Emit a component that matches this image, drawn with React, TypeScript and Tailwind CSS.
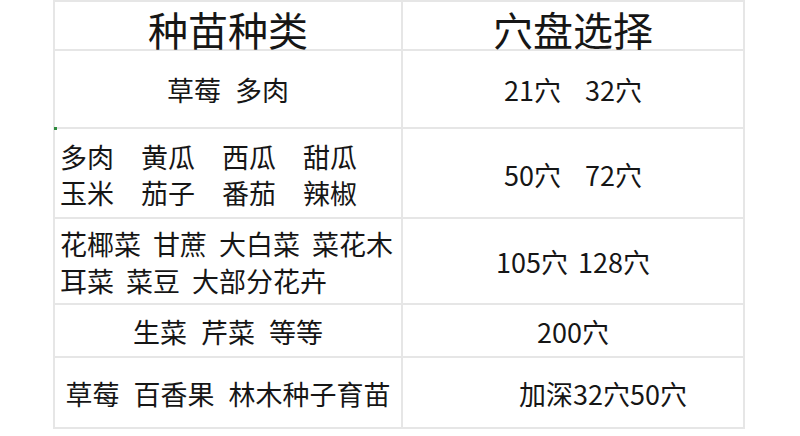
const cjk = { fontFamily: '"Noto Sans CJK SC", "Noto Sans", sans-serif' };

const Words = ({ words, gap }: { words: string[]; gap: string }) => (
  <div className={`flex ${gap}`}>
    {words.map((w, i) => (
      <span key={i} className="whitespace-nowrap">{w}</span>
    ))}
  </div>
);

const App = () => {
  return (
    <div className="h-[436px] w-[800px] bg-white text-[#161616]" style={cjk}>
      <div className="relative ml-[53px] grid w-[692px] grid-cols-[346px_340px] grid-rows-[47px_76px_88px_84px_51px_69px] gap-[2px] bg-[#e6e6e6] p-[2px]">
        {/* header */}
        <div className="flex items-center justify-center bg-white pt-[6px] text-[40px] leading-none">种苗种类</div>
        <div className="flex items-center justify-center bg-white pt-[6px] text-[40px] leading-none">穴盘选择</div>

        {/* row 1 */}
        <div className="flex items-center justify-center bg-white pt-[2px] text-[27px] leading-[36px]">
          <Words words={["草莓", "多肉"]} gap="gap-[14px]" />
        </div>
        <div className="flex items-center justify-center bg-white pt-[2px] text-[27px] leading-[36px]">
          <Words words={["21穴", "32穴"]} gap="gap-[24px]" />
        </div>

        {/* row 2 */}
        <div className="flex flex-col justify-center bg-white pl-[5px] pt-[3px] text-[27px] leading-[36px]">
          <Words words={["多肉", "黄瓜", "西瓜", "甜瓜"]} gap="gap-[27px]" />
          <Words words={["玉米", "茄子", "番茄", "辣椒"]} gap="gap-[27px]" />
        </div>
        <div className="flex items-center justify-center bg-white pt-[3px] text-[27px] leading-[36px]">
          <Words words={["50穴", "72穴"]} gap="gap-[24px]" />
        </div>

        {/* row 3 */}
        <div className="flex flex-col justify-center bg-white pl-[5px] pt-[2px] text-[27px] leading-[37px]">
          <Words words={["花椰菜", "甘蔗", "大白菜", "菜花木"]} gap="gap-[12px]" />
          <Words words={["耳菜", "菜豆", "大部分花卉"]} gap="gap-[12px]" />
        </div>
        <div className="flex items-center justify-center bg-white pt-[2px] text-[27px] leading-[36px]">
          <Words words={["105穴", "128穴"]} gap="gap-[10px]" />
        </div>

        {/* row 4 */}
        <div className="flex items-center justify-center bg-white pt-[3px] text-[27px] leading-[36px]">
          <Words words={["生菜", "芹菜", "等等"]} gap="gap-[14px]" />
        </div>
        <div className="flex items-center justify-center bg-white pt-[3px] text-[27px] leading-[36px]">
          <span>200穴</span>
        </div>

        {/* row 5 */}
        <div className="flex items-center justify-center bg-white pt-[3px] text-[27px] leading-[36px]">
          <Words words={["草莓", "百香果", "林木种子育苗"]} gap="gap-[14px]" />
        </div>
        <div className="flex items-center justify-center bg-white pl-[60px] pt-[3px] text-[27px] leading-[36px]">
          <span>加深32穴50穴</span>
        </div>

        {/* cell selection corner mark */}
        <span className="absolute left-[1px] top-[127px] h-[3px] w-[3px] bg-[#2e8b3e]" />
      </div>
    </div>
  );
};

export default App;
